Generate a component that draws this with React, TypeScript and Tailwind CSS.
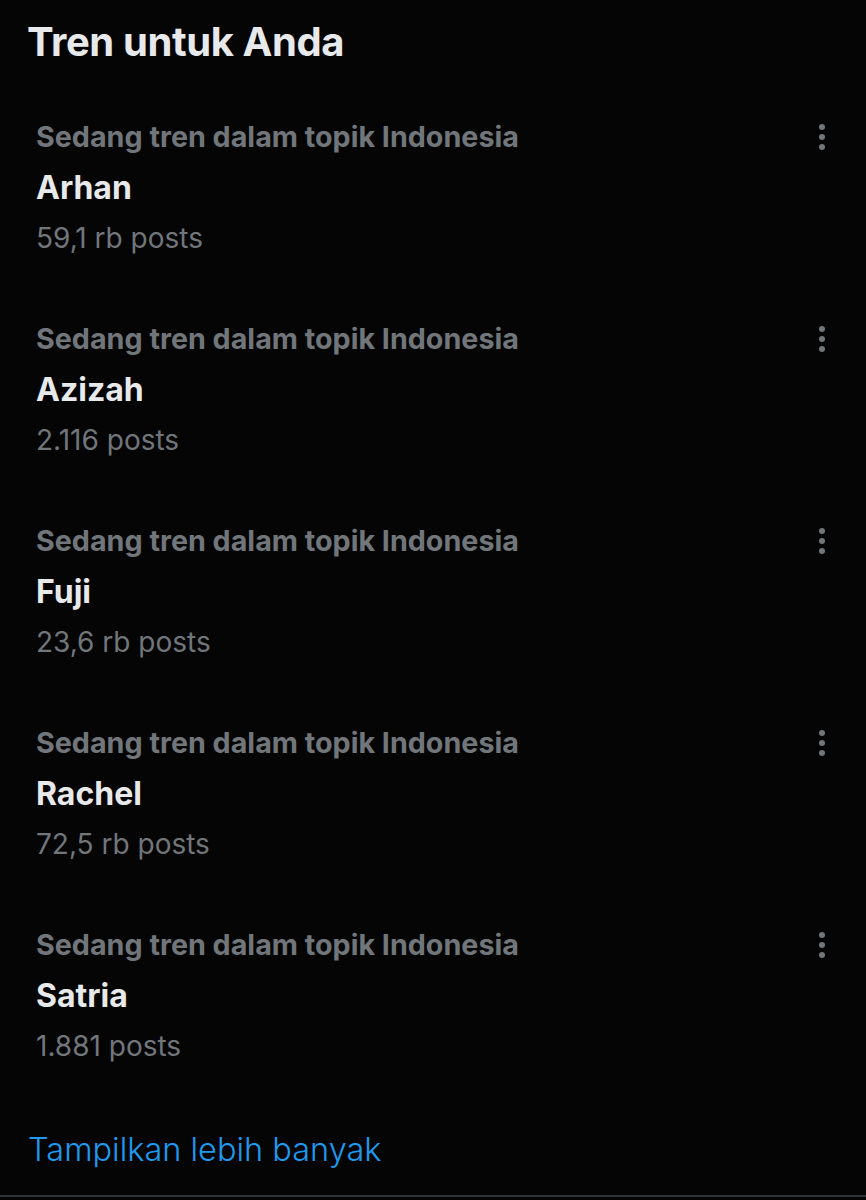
import React from "react";

const trends = [
  { name: "Arhan", posts: "59,1 rb posts" },
  { name: "Azizah", posts: "2.116 posts" },
  { name: "Fuji", posts: "23,6 rb posts" },
  { name: "Rachel", posts: "72,5 rb posts" },
  { name: "Satria", posts: "1.881 posts" },
];

function Dots() {
  return (
    <svg width="8" height="28" viewBox="0 0 8 28" className="text-[#71767b]">
      <circle cx="4" cy="4" r="3" fill="currentColor" />
      <circle cx="4" cy="14" r="3" fill="currentColor" />
      <circle cx="4" cy="24" r="3" fill="currentColor" />
    </svg>
  );
}

export default function App() {
  return (
    <div
      className="w-[866px] h-[1200px] bg-[#050505] flex flex-col overflow-hidden"
      style={{ fontFamily: "Inter, 'Noto Sans', sans-serif" }}
    >
      <h1 className="text-[40px] leading-[44px] font-bold text-[#e7e9ea] pl-[27px] pt-[20px] tracking-[-0.4px]">
        Tren untuk Anda
      </h1>
      <div className="flex flex-col pt-[56px]">
        {trends.map((t) => (
          <div key={t.name} className="flex justify-between pl-[36px] pr-[40px] h-[202px]">
            <div className="flex flex-col">
              <div className="text-[28.7px] leading-[34px] font-bold text-[#71767b]">
                Sedang tren dalam topik Indonesia
              </div>
              <div className="text-[32px] leading-[42px] mt-[13px] font-bold text-[#e7e9ea]">{t.name}</div>
              <div className="text-[28px] leading-[34px] mt-[12px] text-[#71767b]">{t.posts}</div>
            </div>
            <div className="pt-[3px]">
              <Dots />
            </div>
          </div>
        ))}
      </div>
      <div className="flex-1" />
      <div className="pl-[28px] pb-[25px] text-[32.5px] leading-[40px] text-[#1d9bf0] font-light">
        Tampilkan lebih banyak
      </div>
      <div className="h-[2px] bg-[#2f3336]" />
      <div className="h-[3px]" />
    </div>
  );
}
